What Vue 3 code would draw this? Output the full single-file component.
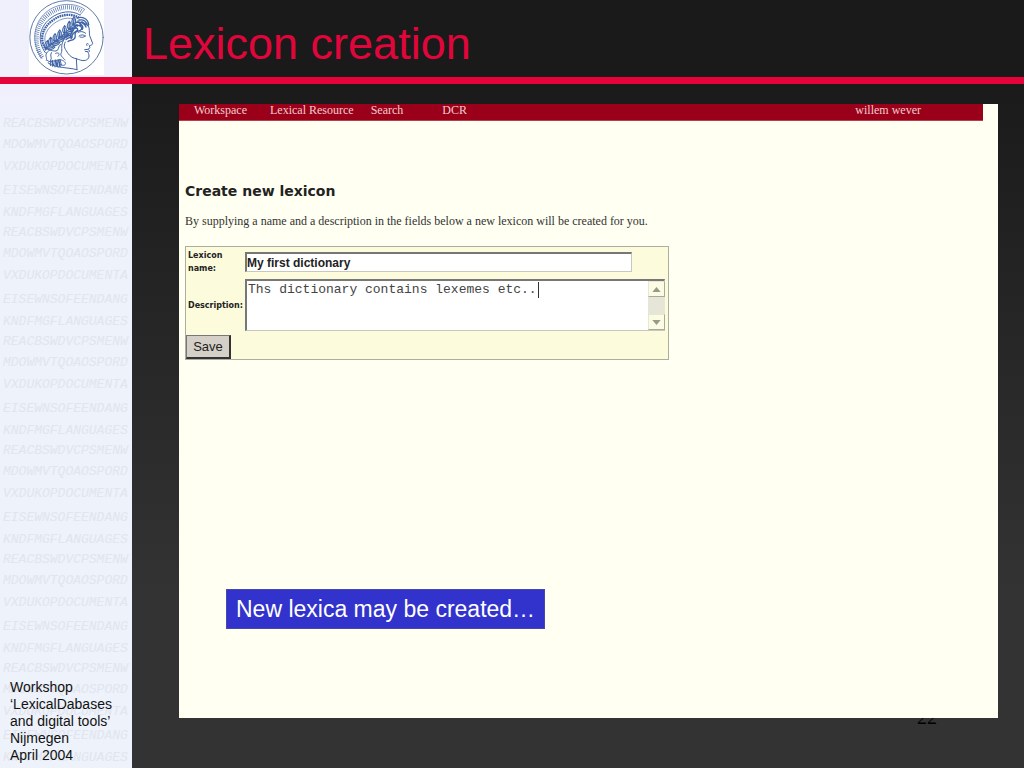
<template>
  <div class="slide">

    <header class="top">
      <div class="logo">
        <!-- Minerva emblem -->
        <svg viewBox="87 0 225 225" fill="none" stroke="#3f64a6" stroke-width="3" stroke-linecap="round" stroke-linejoin="round">
          <circle cx="199.500" cy="112" r="110" stroke="#5f7ba6" />
          <!-- crest -->
          <path d="M126 176C94 134 96 74 138 37C172 8 222 6 254 28L240 45" stroke-width="2" />
          <path d="M126 172C100 132 104 78 143 45C176 18 218 15 246 34" stroke-width="13" stroke-dasharray="2 4" stroke-linecap="butt" />
          <path d="M136 158C111 125 117 83 150 56C180 33 214 29 240 45" stroke-width="3" />
          <path d="M139 150C118 122 124 88 154 64C182 42 212 39 236 53" stroke-width="7" stroke-dasharray="5 2" stroke-linecap="butt" />
          <path d="M143 143C127 120 133 94 160 72C184 54 206 50 228 59" stroke-width="2" />
          <!-- laurel -->
          <path d="M136 148C160 130 190 105 236 60" stroke-width="3" />
          <g stroke-width="3" fill="#c9d6ec">
            <path v-for="(leaf, i) in leaves" :key="i" d="M0 0C3 -10 13 -13 23 -11C20 -2 11 4 0 0ZM2 -1L17 -8" :transform="leaf" />
          </g>
          <!-- hair -->
          <path d="M231 54C248 48 265 57 266 75M238 60C251 57 260 66 262 77M228 68C241 63 254 70 258 81M222 78C235 72 249 80 244 88C239 96 229 91 226 99C223 108 230 110 222 117C216 123 207 119 204 125M216 86C228 83 236 84 232 91C225 96 219 98 216 107C213 115 202 112 198 119M210 94C219 92 218 100 209 106C202 110 193 108 190 117M240 74C248 76 251 82 247 88M203 102C207 106 198 112 194 107M213 116C219 112 217 105 211 109M226 80L218 93M246 65L257 73M235 66L247 77" stroke-width="4" />
          <!-- face -->
          <path d="M265 77C270 87 267 98 269 107L278 130C277 136 271 136 268 137L270 143L264 148L269 153L264 158C270 166 267 178 257 181C246 184 236 178 229 176L231 209M196 126C187 139 198 151 204 160C211 170 219 175 229 176" stroke-width="3" />
          <path d="M234 98C241 92 251 95 257 100M237 108C243 103 252 104 257 108M240 111C246 113 251 112 255 109M265 132C260 128 258 132 261 137M254 149L264 148M256 154L263 155" stroke-width="3" />
          <!-- ear, strap and collar -->
          <path d="M190 122C181 136 188 148 184 158C178 168 191 173 195 180M182 133C172 142 178 151 168 153C157 154 150 147 143 155C132 166 143 172 139 181M154 158C148 168 158 173 152 181M167 160C177 156 181 162 174 169M142 181C149 190 158 180 166 184C174 177 187 178 194 186C202 193 190 201 181 193M145 188L150 193M152 182V197M158 181V199M165 182V201M171 180L174 202M180 178L184 195M146 190C166 204 205 202 231 209" stroke-width="3" />
          <path d="M156 184L160 196M166 181L171 197M176 181L180 199" stroke-width="5" />
        </svg>
      </div>
      <h1>Lexicon creation</h1>
    </header>

    <div class="body">

      <aside class="side">
        <div class="letters" aria-hidden="true">
          <div v-for="n in 6" :key="n">
            <div v-for="row in rows" :key="row.text" :class="['row', row.size]">{{ row.text }}</div>
          </div>
        </div>
        <p class="event">
          Workshop<br>
          ‘LexicalDabases<br>
          and digital tools’<br>
          Nijmegen<br>
          April 2004
        </p>
      </aside>

      <main class="main">
        <span class="number">22</span>

        <section class="screen">
          <nav class="menu">
            <a href="#" class="workspace">Workspace</a>
            <a href="#" class="resource">Lexical Resource</a>
            <a href="#" class="search">Search</a>
            <a href="#">DCR</a>
            <span class="user">willem wever</span>
          </nav>

          <h2>Create new lexicon</h2>
          <p class="intro">
            By supplying a name and a description in the fields below a new lexicon will be created for you.
          </p>

          <form class="form" @submit.prevent>
            <div class="line">
              <label for="name">Lexicon name:</label>
              <input id="name" v-model="name" type="text">
            </div>
            <div class="line">
              <label for="description">Description:</label>
              <div class="area">
                <textarea id="description" v-model="description"></textarea>
                <span class="caret" :style="{ marginLeft: description.length + 'ch' }"></span>
                <div class="scroll">
                  <button type="button" aria-label="Scroll up">
                    <svg viewBox="0 0 10 6"><path d="M5 0L10 6H0Z" /></svg>
                  </button>
                  <button type="button" aria-label="Scroll down">
                    <svg viewBox="0 0 10 6"><path d="M0 0H10L5 6Z" /></svg>
                  </button>
                </div>
              </div>
            </div>
            <button type="submit" class="save">Save</button>
          </form>

          <div class="callout">New lexica may be created…</div>
        </section>
      </main>

    </div>

  </div>
</template>

<script setup>
import { ref } from "vue"

const name = ref("My first dictionary")
const description = ref("Ths dictionary contains lexemes etc..")

// Background lettering of the sidebar
const rows = [
  { text: "REACBSWDVCPSMENW", size: "low" },
  { text: "MDOWMVTQOAOSPORD", size: "mid" },
  { text: "VXDUKOPDOCUMENTA", size: "high" },
  { text: "EISEWNSOFEENDANG", size: "high" },
  { text: "KNDFMGFLANGUAGES", size: "low" },
]

// Leaves of the wreath, on both sides of the stem
const leaves = [
  "translate(137 146) rotate(-50)",
  "translate(150 137) rotate(-60)",
  "translate(164 126) rotate(-62)",
  "translate(178 115) rotate(-62)",
  "translate(193 102) rotate(-62)",
  "translate(207 89) rotate(-62)",
  "translate(220 76) rotate(-60)",
  "translate(140 146) rotate(14)",
  "translate(155 134) rotate(10)",
  "translate(169 123) rotate(10)",
  "translate(183 112) rotate(8)",
  "translate(197 99) rotate(5)",
  "translate(211 86) rotate(0)",
]
</script>

<style>
body {
  margin: 0;
}
</style>

<style scoped>
.slide {
  display: flex;
  flex-direction: column;
  min-height: 100vh;
  font-family: "Liberation Sans", Arial, sans-serif;
  background: linear-gradient(#1a1a1a 80px, #333 600px);
}

.top {
  display: flex;
  height: 77px;
  border-bottom: 7px solid #e60339;
}

.logo {
  display: flex;
  justify-content: center;
  width: 132px;
  background: #f0f0fc;
}

.logo svg {
  width: 75px;
  height: 75px;
  background: #fff;
}

h1 {
  margin: 0 0 0 11px;
  color: #e0063b;
  font-size: 45px;
  font-weight: normal;
  line-height: 88px;
}

.body {
  flex: 1;
  display: flex;
}

.side {
  position: relative;
  display: flex;
  align-items: flex-end;
  width: 132px;
  overflow: hidden;
  background: linear-gradient(#f0f0fc 10px, #eef2fb 40px);
}

.letters {
  position: absolute;
  inset: 30px 0 0;
  padding-left: 3px;
  overflow: hidden;
  color: #e1e5ee;
  font-family: "Liberation Mono", "Courier New", monospace;
  font-size: 13px;
  font-style: italic;
}

.row {
  white-space: nowrap;
}

.low {
  height: 20px;
  line-height: 20px;
}

.mid {
  height: 21px;
  line-height: 21px;
}

.high {
  height: 24px;
  line-height: 24px;
}

.event {
  position: relative;
  margin: 0 0 4px 10px;
  color: #111;
  font-size: 14px;
  line-height: 17px;
}

.main {
  position: relative;
  flex: 1;
  display: flex;
  padding: 20px 26px 50px 47px;
}

/* page number, half covered by the screen */
.number {
  position: absolute;
  right: 87px;
  bottom: 39px;
  color: #000;
  font-family: "Liberation Serif", serif;
  font-size: 20px;
  line-height: 24px;
}

.screen {
  position: relative;
  flex: 1;
  display: flex;
  flex-direction: column;
  background: #fffff2;
}

.menu {
  display: flex;
  height: 16px;
  margin-right: 15px;
  padding: 0 62px 0 15px;
  border-bottom: 1px solid #b5404c;
  background: #9b001a;
  color: #f0cdca;
  font-family: "Liberation Serif", "Times New Roman", serif;
  font-size: 12px;
  line-height: 12px;
}

.menu a {
  color: inherit;
  text-decoration: none;
}

.workspace {
  margin-right: 23px;
}

.resource {
  margin-right: 17px;
}

.search {
  margin-right: 39px;
}

.user {
  margin-left: auto;
}

h2 {
  margin: 60px 0 0 6px;
  color: #222;
  font-family: "DejaVu Sans", Verdana, sans-serif;
  font-size: 14px;
  line-height: 20px;
}

.intro {
  margin: 12px 6px 0;
  color: #333;
  font-family: "Liberation Serif", "Times New Roman", serif;
  font-size: 12px;
  line-height: 16px;
}

.form {
  display: flex;
  flex-direction: column;
  box-sizing: border-box;
  width: 484px;
  max-width: 100%;
  margin: 17px 0 0 6px;
  padding-top: 1px;
  border: 1px solid #adada0;
  background: #fcfcdc;
}

.line {
  display: flex;
  align-items: center;
  margin-bottom: 4px;
}

.line label {
  box-sizing: border-box;
  width: 59px;
  padding-left: 2px;
  color: #222;
  font-family: "DejaVu Sans", Verdana, sans-serif;
  font-size: 8px;
  font-weight: bold;
  line-height: 13px;
}

.line input {
  box-sizing: border-box;
  width: 387px;
  height: 20px;
  margin: 4px 0 3px;
  padding: 1px 0 0;
  border: 1px solid #c8c8c0;
  border-top: 2px solid #777;
  border-left: 2px solid #777;
  background: #fff;
  color: #222;
  font-family: "Liberation Sans", Arial, sans-serif;
  font-size: 12px;
  font-weight: bold;
}

.area {
  position: relative;
  width: 420px;
  font-family: "Liberation Mono", "Courier New", monospace;
  font-size: 13px;
}

.area textarea {
  display: block;
  box-sizing: border-box;
  width: 100%;
  height: 52px;
  padding: 1px 18px 0 1px;
  border: 1px solid #c8c8c0;
  border-top: 2px solid #777;
  border-left: 2px solid #777;
  outline: none;
  overflow: hidden;
  resize: none;
  background: #fff;
  color: #444;
  font: inherit;
  line-height: 16px;
}

.caret {
  position: absolute;
  top: 3px;
  left: 4px;
  width: 1px;
  height: 16px;
  background: #333;
}

.scroll {
  position: absolute;
  top: 2px;
  right: 0;
  bottom: 1px;
  display: flex;
  flex-direction: column;
  justify-content: space-between;
  width: 17px;
  background: #e6e6d8;
}

.scroll button {
  display: flex;
  align-items: center;
  justify-content: center;
  box-sizing: border-box;
  width: 17px;
  height: 16px;
  padding: 0;
  border: 1px solid #e8e8cc;
  border-right-color: #aaa99a;
  border-bottom-color: #aaa99a;
  background: #fcfce4;
}

.scroll svg {
  width: 9px;
  height: 5px;
  fill: #99998a;
}

.save {
  box-sizing: border-box;
  width: 45px;
  height: 24px;
  padding: 0;
  border: 1px solid #777;
  border-right: 2px solid #333;
  border-bottom: 2px solid #333;
  background: #d4d0c8;
  color: #222;
  font-family: "Liberation Sans", Arial, sans-serif;
  font-size: 13px;
}

.callout {
  align-self: flex-start;
  margin: auto 0 89px 47px;
  padding: 0 9px;
  border: 1px solid #4848a8;
  background: #3232cc;
  color: #fff;
  font-size: 23px;
  line-height: 38px;
}
</style>
